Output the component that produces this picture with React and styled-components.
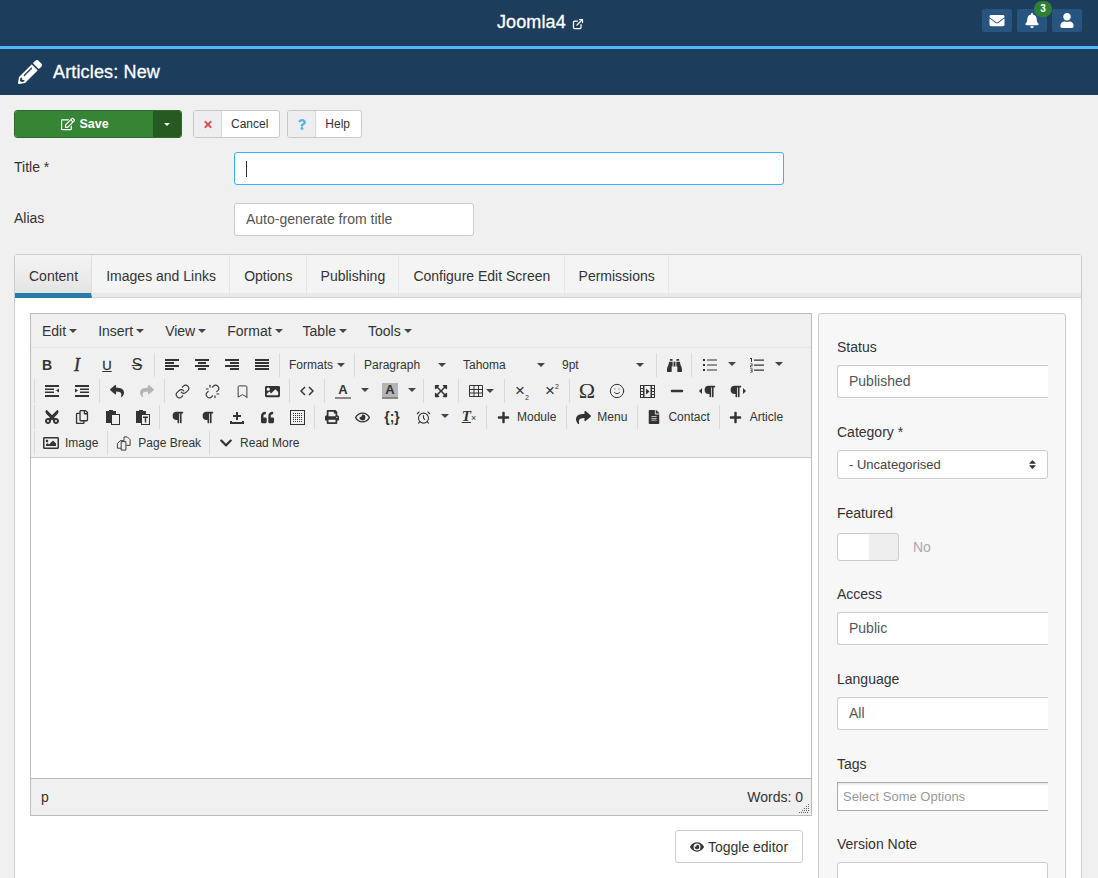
import React from "react";
import styled, { createGlobalStyle } from "styled-components";
import {
  FaReply, FaShare, FaImage, FaRegImage, FaExpandArrowsAlt, FaRegEye, FaEye, FaMinus, FaParagraph, FaCut, FaRegCopy,
  FaQuoteLeft, FaPrint, FaPlus, FaFileAlt, FaChevronDown, FaEnvelope, FaBell, FaUser, FaPencilAlt, FaRegEdit,
  FaTimes, FaQuestion, FaSort, FaBinoculars,
} from "react-icons/fa";
import { ExternalLink, Link, Unlink, Bookmark, AlarmClock, Smile } from "lucide-react";

const Global = createGlobalStyle`
  html, body { margin: 0; padding: 0; background: #f0f0f0; }
  body { font-family: "Liberation Sans", Arial, sans-serif; font-size: 14px; color: #333; }
  * { box-sizing: border-box; }
`;

const Page = styled.div`height: 878px; overflow: hidden; background: #f0f0f0;`;
const TopBar = styled.header`
  height: 49px; background: #1c3d5c; border-bottom: 3px solid #4fb8fb;
  display: flex; align-items: center; justify-content: flex-end; padding: 0 16px 3px 0; position: relative;
`;
const Brand = styled.div`
  position: absolute; left: 497px; top: 12px; color: #fff; font-size: 18px; line-height: 21px; letter-spacing: 0.1px;
  -webkit-text-stroke: 0.3px #fff; display: flex; align-items: center; gap: 6px;
  svg { margin-top: 2px; -webkit-text-stroke: 0; }
`;
const TopButtons = styled.div`display: flex; gap: 5px; margin-top: -3px;`;
const TopButton = styled.div`
  width: 30px; height: 23px; background: #285580; border-radius: 2px; color: #fff; position: relative;
  display: flex; align-items: center; justify-content: center;
  svg { width: 16px; height: 15px; }
`;
const Badge = styled.span`
  position: absolute; left: 17px; top: -8px; width: 18px; height: 16px; border-radius: 8px; background: #2f8033;
  color: #fff; font-size: 10px; font-weight: 700; line-height: 16px; text-align: center;
`;
const TitleBar = styled.div`
  height: 46px; background: #1c3d5c; color: #fff; display: flex; align-items: center; padding-left: 18px; gap: 11px;
  svg { width: 24px; height: 24px; }
`;
const PageTitle = styled.h1`margin: 0; font-size: 18px; font-weight: 400; letter-spacing: 0.15px; -webkit-text-stroke: 0.3px #fff;`;
const Actions = styled.div`display: flex; padding: 15px 14px 0; height: 43px;`;
const SaveGroup = styled.div`
  width: 168px; height: 28px; display: flex; border-radius: 3px; overflow: hidden; color: #fff; font-size: 12.500px;
  font-weight: 700; border: 1px solid #2a6b2a; margin-right: 11px;
`;
const SaveMain = styled.div`
  flex: 1; background: #358535; display: flex; align-items: center; justify-content: center; gap: 4px; padding-left: 2px;
  svg { width: 14px; height: 14px; }
`;
const SaveCaret = styled.div`width: 28px; background: #275a21; display: flex; align-items: center; justify-content: center;`;
const Btn = styled.div`
  height: 28px; display: flex; border: 1px solid #c8c8c8; border-radius: 3px; overflow: hidden; margin-right: 7px;
  background: #fff; font-size: 12px; color: #333;
`;
const BtnIcon = styled.span`
  width: 28px; background: #eeeef0; border-right: 1px solid #d8d8d8; display: flex; align-items: center; justify-content: center;
  color: ${(p) => p.$color};
  svg { width: 10px; height: 11px; }
`;
const BtnText = styled.span`padding: 0 11px 0 9px; line-height: 26px;`;
const FormRow = styled.div`display: flex; padding-left: 14px; margin-top: ${(p) => p.$top}px;`;
const RowLabel = styled.label`width: 220px; font-size: 14px; line-height: 16px; color: #333; padding-top: 7px;`;
const TextInput = styled.div`
  width: ${(p) => p.$w}px; height: 33px; background: #fff; border: 1px solid ${(p) => (p.$focus ? "#2fb5ff" : "#ccc")};
  border-radius: 3px; font-size: 14px; line-height: 31px; padding-left: 11px; color: #555;
`;
const TextCursor = styled.span`display: inline-block; width: 1px; height: 16px; background: #333; vertical-align: middle;`;

const TabPanel = styled.section`
  margin: 18px 16px 0 14px; background: #fff; border: 1px solid #ccc; border-radius: 3px 3px 0 0; height: 700px;
`;
const TabBar = styled.nav`display: flex; height: 43px; background: #f4f4f4; border-bottom: 1px solid #d4d4d4; box-shadow: inset 0 -4px 0 #e9e9e9;`;
const Tab = styled.div`
  padding: 0 13.200px 0 14px; font-size: 14px; line-height: 42px; color: #333; border-right: 1px solid #e6e6e6;
  ${(p) => p.$active && "background: linear-gradient(#f4f4f4, #e4e4e4); border-bottom: 5px solid #2a7ca6; height: 43px; border-right: 1px solid #ddd;"}
`;
const TabBody = styled.div`display: flex; gap: 6px; padding: 15px 15px 0;`;
const EditorCol = styled.div`width: 782px; flex: none;`;
const Editor = styled.div`border: 1px solid #bbb; background: #f0f0f0;`;
const MenuBar = styled.div`display: flex; height: 34px; align-items: center; padding-left: 11px; border-bottom: 1px solid #e4e4e4; color: #333;`;
const MenuItem = styled.span`
  font-size: 14px; margin-right: 21px; display: inline-flex; align-items: center; gap: 3px;
  &:nth-child(4) { margin-right: 20px; }
`;
const Caret = styled.i`
  display: inline-block; flex: none; width: 0; height: 0; border-left: 4px solid transparent; border-right: 4px solid transparent;
  border-top: 4px solid ${(p) => p.$color || "#444"};
`;
const SmallCaret = styled.i`
  display: block; width: 0; height: 0; border-left: 3px solid transparent; border-right: 3px solid transparent; border-top: 3px solid #fff;
`;
const Toolbars = styled.div`padding-top: 4px; border-bottom: 1px solid #c8c8c8; height: 110px;`;
const ToolRow = styled.div`display: flex; height: 26px; padding-left: 3px;`;
const Group = styled.div`
  display: flex; height: 24px; margin: 1px 2px 1px 0; padding-left: 2px;
  ${(p) => (p.$first ? "margin-left: -2px; padding-left: 0;" : "border-left: 1px solid #dadada;")}
`;
const ToolBtn = styled.div`
  width: ${(p) => p.$w || 30}px; height: 24px; display: flex; align-items: center; justify-content: center; flex: none;
  color: ${(p) => p.$color || "#333"}; font-size: 12px; position: relative; gap: 3px;
  svg { display: block; }
`;
const SplitCaret = styled.span`position: absolute; left: 34px; top: 9px; display: flex;`;
const SplitIcon = styled.span`position: absolute; left: 8px; top: 4px; display: flex; align-items: center; justify-content: center; width: 16px; height: 16px;`;
const TextBtn = styled.div`
  display: flex; align-items: center; height: 24px; padding: 0 ${(p) => p.$pr ?? 8}px 0 6px; font-size: 12px; color: #333; gap: 6px;
  svg { display: block; }
`;
const Dropdown = styled.div`display: flex; align-items: center; height: 24px; padding: 0 7px; font-size: 12px; color: #333; gap: 4px;`;
const IconBox = styled.span`width: 16px; height: 16px; display: flex; align-items: center; justify-content: center; flex: none;`;
const SelectBtn = styled.div`
  width: 99px; height: 24px; padding-left: 7px; display: flex; align-items: center; font-size: 12px; color: #333; position: relative;
`;
const SelectCaret = styled.span`position: absolute; left: 81px; top: 10px; display: flex;`;
const ColorGlyph = styled.span`
  display: block; width: 16px; height: 16px; font-size: 13px; font-weight: 700; line-height: 14px; text-align: center; color: #333;
  background: ${(p) => (p.$bg ? "#b5b5b5" : "transparent")}; border-bottom: 2px solid #888;
`;
const Omega = styled.span`font-family: "Liberation Serif", serif; font-size: 22px; line-height: 16px; color: #333;`;
const CodeGlyph = styled.span`font-size: 14px; font-weight: 700; color: #333;`;
const ScriptGlyph = styled.span`
  font-size: 17px; color: #333; line-height: 16px;
  sub, sup { font-size: 7px; line-height: 0; }
`;
const ClearGlyph = styled.span`
  font-family: "Liberation Serif", serif; font-style: italic; font-weight: 700; font-size: 15px; line-height: 14px;
  color: #333; text-decoration: underline;
  small { font-size: 9px; font-style: normal; font-family: "Liberation Sans", sans-serif; font-weight: 400; display: inline-block; text-decoration: none; }
`;
const BoldGlyph = styled.span`font-size: 14px; font-weight: 700; color: #333;`;
const ItalicGlyph = styled.span`font-family: "Liberation Serif", serif; font-style: italic; font-size: 18px; -webkit-text-stroke: 0.4px #333; color: #333;`;
const UnderGlyph = styled.span`font-size: 13px; text-decoration: underline; -webkit-text-stroke: 0.3px #333; color: #333;`;
const StrikeGlyph = styled.span`font-size: 16px; text-decoration: line-through; color: #333;`;
const ParaRow = styled.span`display: flex; align-items: center; gap: 1px;`;
const FlipCut = styled.span`display: flex; transform: rotate(-90deg);`;
const Canvas = styled.div`height: 321px; background: #fff; border-bottom: 1px solid #bbb;`;
const StatusBar = styled.div`
  height: 36px; display: flex; justify-content: space-between; align-items: center; padding: 0 8px 0 10px; position: relative; font-size: 14px; color: #333;
`;
const Resize = styled.svg`position: absolute; right: 2px; bottom: 2px;`;
const ToggleRow = styled.div`display: flex; justify-content: flex-end; margin-top: 14px; padding-right: 9px;`;
const ToggleEditor = styled.div`
  width: 128px; height: 33px; background: #fff; border: 1px solid #ccc; border-radius: 3px; display: flex; align-items: center;
  justify-content: center; gap: 4px; font-size: 14px; color: #333;
`;
const Side = styled.aside`
  width: 248px; height: 660px; background: #f7f7f7; border: 1px solid #ccc; border-radius: 3px 3px 0 0; padding: 23px 17px 0 18px;
`;
const Field = styled.div`margin-bottom: ${(p) => p.$mb ?? 24}px;`;
const FieldLabel = styled.label`display: block; font-size: 14px; line-height: 20px; margin-bottom: 8px; color: #333;`;
const SideInput = styled.div`
  width: 211px; height: 33px; background: #fff; border: 1px solid #ccc; border-right: ${(p) => (p.$closed ? "1px solid #ccc" : "none")};
  border-radius: ${(p) => (p.$closed ? "3px" : "3px 0 0 3px")}; font-size: 14px; line-height: 31px; padding-left: 11px; color: #555;
`;
const SideSelect = styled.div`
  width: 211px; height: 29px; background: #fff; border: 1px solid #ccc; border-radius: 3px; font-size: 13px; padding: 0 9px 0 11px;
  display: flex; align-items: center; justify-content: space-between; color: #444;
`;
const TagInput = styled.div`
  width: 211px; height: 29px; background: #fff; border: 1px solid #aaa; border-right: none; font-size: 13px; line-height: 27px;
  padding-left: 5px; color: #999; box-shadow: inset 0 3px 3px -2px #ddd;
`;
const SwitchRow = styled.div`display: flex; align-items: center; gap: 14px; margin-top: 10px;`;
const Switch = styled.div`width: 62px; height: 28px; background: #eee; border: 1px solid #ccc; border-radius: 3px; overflow: hidden;`;
const Knob = styled.div`width: 31px; height: 100%; background: #fff; border-radius: 2px;`;
const NoText = styled.span`font-size: 14px; color: #aaa;`;

const Lines = ({ rows }) => (
  <svg width="16" height="14" viewBox="0 0 16 14">
    {rows.map(([x, y, w, h = 2], i) => <rect key={i} x={x} y={y} width={w} height={h} fill="#333" />)}
  </svg>
);
const alignL = [[1, 1, 14], [1, 4, 9], [1, 7, 14], [1, 10, 9]];
const alignC = [[1, 1, 14], [4, 4, 8], [1, 7, 14], [4, 10, 8]];
const alignR = [[1, 1, 14], [6, 4, 9], [1, 7, 14], [6, 10, 9]];
const alignJ = [[1, 1, 14], [1, 4, 14], [1, 7, 14], [1, 10, 14]];
const Outdent = () => (
  <svg width="16" height="14" viewBox="0 0 16 14"><path fill="#333" d="M1 1h14v2H1zM1 4.500h9v1.500H1zM1 7.500h9V9H1zM1 11h14v2H1zM15 4.500v4l-3-2z" /></svg>
);
const Indent = () => (
  <svg width="16" height="14" viewBox="0 0 16 14"><path fill="#333" d="M1 1h14v2H1zM6 4.500h9v1.500H6zM6 7.500h9V9H6zM1 11h14v2H1zM1 4.500v4l3-2z" /></svg>
);
const ListBullet = () => (
  <svg width="16" height="14" viewBox="0 0 16 14"><path fill="#333" d="M1 1h2v2H1zM1 6h2v2H1zM1 11h2v2H1zM5 1.500h10v1H5zM5 6.500h10v1H5zM5 11.500h10v1H5z" /></svg>
);
const ListNum = () => (
  <svg width="16" height="16" viewBox="0 0 16 16">
    <path fill="#333" d="M5 2.500h10v1.200H5zM5 7.500h10v1.200H5zM5 12.500h10v1.200H5zM1 1h2v4H2V2H1zM1 6.500h2.500v2.500H2v.7h1.500v.6H1V8.400h1.500v-1.300H1zM1 11.500h2.500v4H1V15h1.500v-1H1.300v-.6H2.500v-1.300H1z" />
  </svg>
);
const Table = () => (
  <svg width="14" height="12" viewBox="0 0 14 12" fill="none" stroke="#333">
    <path d="M.5.500h13v11H.5zM.5 4.500h13M.5 8h13M5 .500v11M9.500.500v11" />
  </svg>
);
const Film = () => (
  <svg width="15" height="13" viewBox="0 0 15 13">
    <path fill="#333" fillRule="evenodd" d="M0 0h15v13H0zM1 1v2h2V1zM1 4v2h2V4zM1 7v2h2V7zM1 10v2h2v-2zM12 1v2h2V1zM12 4v2h2V4zM12 7v2h2V7zM12 10v2h2v-2zM4.500 1v11h6V1z" />
    <path fill="#333" d="M6 3.500l3.500 3-3.500 3z" />
  </svg>
);
const Upload = () => (
  <svg width="16" height="16" viewBox="0 0 16 16"><path fill="#333" d="M7 3h2v3h3v2H9v3H7V8H4V6h3zM1 12h2v1h10v-1h2v3H1z" /></svg>
);
const Template = () => (
  <svg width="15" height="15" viewBox="0 0 15 15">
    <rect x=".5" y=".5" width="14" height="14" fill="none" stroke="#333" />
    <path stroke="#333" strokeDasharray="1 1" d="M3 3.500h9M3 5.500h9M3 7.500h9M3 9.500h9M3 11.500h9" />
  </svg>
);
const PageBreak = () => (
  <svg width="17" height="17" viewBox="0 0 17 17" fill="none" stroke="#333">
    <path d="M1.500 8.500l3-3h4v-4h3.500l3 3v6h-4" /><path d="M5.500 6.500h5v9h-5z" /><path d="M1.500 8.500v5h4" />
  </svg>
);
const Code = () => (
  <svg width="14" height="10" viewBox="0 0 14 10" fill="none" stroke="#333" strokeWidth="1.500"><path d="M5 1L1 5l4 4M9 1l4 4-4 4" /></svg>
);
const Paste = ({ t }) => (
  <svg width="15" height="16" viewBox="0 0 15 16">
    <path fill="#333" d="M1 2h3V1h4v1h3v3H7v9H1z" />
    <path fill="#333" fillRule="evenodd" d="M6 5h9v11H6zM7 6v9h7V6z" />
    {t && <path fill="#333" d="M8 7.500h5v1.500h-1.800v4.500H9.800V9H8z" />}
  </svg>
);
const Para = ({ dir }) => (
  <ParaRow>
    {dir === "l" && <svg width="3" height="6" viewBox="0 0 3 6"><path d="M3 0v6L0 3z" fill="#333" /></svg>}
    <FaParagraph size={13} />
    {dir === "r" && <svg width="3" height="6" viewBox="0 0 3 6"><path d="M0 0v6l3-3z" fill="#333" /></svg>}
  </ParaRow>
);

const Split = ({ children }) => (
  <ToolBtn $w={47}>
    <SplitIcon>{children}</SplitIcon>
    <SplitCaret><Caret /></SplitCaret>
  </ToolBtn>
);
const I = ({ children, color }) => <ToolBtn $color={color}>{children}</ToolBtn>;
const T = ({ icon, children, pr }) => <TextBtn $pr={pr}><IconBox>{icon}</IconBox>{children}</TextBtn>;
const Sel = ({ children }) => <SelectBtn>{children}<SelectCaret><Caret /></SelectCaret></SelectBtn>;

export default function App() {
  return (
    <Page>
      <Global />
      <TopBar>
        <Brand>Joomla4 <ExternalLink size={12} strokeWidth={2.5} /></Brand>
        <TopButtons>
          <TopButton><FaEnvelope /></TopButton>
          <TopButton><FaBell /><Badge>3</Badge></TopButton>
          <TopButton><FaUser /></TopButton>
        </TopButtons>
      </TopBar>
      <TitleBar><FaPencilAlt /><PageTitle>Articles: New</PageTitle></TitleBar>
      <Actions>
        <SaveGroup>
          <SaveMain><FaRegEdit /> Save</SaveMain>
          <SaveCaret><SmallCaret /></SaveCaret>
        </SaveGroup>
        <Btn><BtnIcon $color="#d9534f"><FaTimes /></BtnIcon><BtnText>Cancel</BtnText></Btn>
        <Btn><BtnIcon $color="#4db6e6"><FaQuestion /></BtnIcon><BtnText>Help</BtnText></Btn>
      </Actions>
      <FormRow $top={14}>
        <RowLabel>Title *</RowLabel>
        <TextInput $w={550} $focus><TextCursor /></TextInput>
      </FormRow>
      <FormRow $top={18}>
        <RowLabel>Alias</RowLabel>
        <TextInput $w={240}>Auto-generate from title</TextInput>
      </FormRow>
      <TabPanel>
        <TabBar>
          <Tab $active>Content</Tab>
          <Tab>Images and Links</Tab>
          <Tab>Options</Tab>
          <Tab>Publishing</Tab>
          <Tab>Configure Edit Screen</Tab>
          <Tab>Permissions</Tab>
        </TabBar>
        <TabBody>
          <EditorCol>
            <Editor>
              <MenuBar>
                <MenuItem>Edit <Caret /></MenuItem>
                <MenuItem>Insert <Caret /></MenuItem>
                <MenuItem>View <Caret /></MenuItem>
                <MenuItem>Format <Caret /></MenuItem>
                <MenuItem>Table <Caret /></MenuItem>
                <MenuItem>Tools <Caret /></MenuItem>
              </MenuBar>
              <Toolbars>
                <ToolRow>
                  <Group $first>
                    <I><BoldGlyph>B</BoldGlyph></I><I><ItalicGlyph>I</ItalicGlyph></I><I><UnderGlyph>U</UnderGlyph></I><I><StrikeGlyph>S</StrikeGlyph></I>
                  </Group>
                  <Group>
                    <I><Lines rows={alignL} /></I><I><Lines rows={alignC} /></I><I><Lines rows={alignR} /></I><I><Lines rows={alignJ} /></I>
                  </Group>
                  <Group><Dropdown>Formats <Caret /></Dropdown></Group>
                  <Group>
                    <Sel>Paragraph</Sel><Sel>Tahoma</Sel><Sel>9pt</Sel>
                  </Group>
                  <Group><I><FaBinoculars size={15} /></I></Group>
                  <Group>
                    <Split><ListBullet /></Split><Split><ListNum /></Split>
                  </Group>
                </ToolRow>
                <ToolRow>
                  <Group><I><Outdent /></I><I><Indent /></I></Group>
                  <Group><I><FaReply size={14} /></I><I color="#b5b5b5"><FaShare size={14} /></I></Group>
                  <Group>
                    <I><Link size={15} strokeWidth={1.8} /></I><I><Unlink size={15} strokeWidth={1.8} /></I>
                    <I><Bookmark size={15} strokeWidth={1.5} /></I><I><FaImage size={15} /></I>
                  </Group>
                  <Group><I><Code /></I></Group>
                  <Group>
                    <Split><ColorGlyph>A</ColorGlyph></Split><Split><ColorGlyph $bg>A</ColorGlyph></Split>
                  </Group>
                  <Group><I><FaExpandArrowsAlt size={14} /></I></Group>
                  <Group>
                    <ToolBtn $w={41}><Table /><Caret /></ToolBtn>
                  </Group>
                  <Group>
                    <I><ScriptGlyph>×<sub>2</sub></ScriptGlyph></I><I><ScriptGlyph>×<sup>2</sup></ScriptGlyph></I>
                  </Group>
                  <Group>
                    <I><Omega>Ω</Omega></I><I><Smile size={16} strokeWidth={1.5} /></I><I><Film /></I><I><FaMinus size={14} /></I><I><Para dir="l" /></I><I><Para dir="r" /></I>
                  </Group>
                </ToolRow>
                <ToolRow>
                  <Group>
                    <I><FlipCut><FaCut size={16} /></FlipCut></I><I><FaRegCopy size={14} /></I><I><Paste /></I><I><Paste t /></I>
                  </Group>
                  <Group>
                    <I><FaParagraph size={13} /></I><I><FaParagraph size={13} /></I><I><Upload /></I><I><FaQuoteLeft size={13} /></I><I><Template /></I>
                  </Group>
                  <Group>
                    <I><FaPrint size={14} /></I><I><FaRegEye size={15} /></I><I><CodeGlyph>{"{;}"}</CodeGlyph></I>
                    <Split><AlarmClock size={15} strokeWidth={1.7} /></Split>
                    <I><ClearGlyph>T<small>×</small></ClearGlyph></I>
                  </Group>
                  <Group><T icon={<FaPlus size={13} />}>Module</T></Group>
                  <Group><T icon={<FaShare size={15} />}>Menu</T></Group>
                  <Group><T icon={<FaFileAlt size={14} />} pr={7}>Contact</T></Group>
                  <Group><T icon={<FaPlus size={13} />}>Article</T></Group>
                </ToolRow>
                <ToolRow>
                  <Group><T icon={<FaRegImage size={16} />} pr={7}>Image</T></Group>
                  <Group><T icon={<PageBreak />} pr={6}>Page Break</T></Group>
                  <Group><T icon={<FaChevronDown size={14} />}>Read More</T></Group>
                </ToolRow>
              </Toolbars>
              <Canvas />
              <StatusBar>
                <span>p</span>
                <span>Words: 0</span>
                <Resize width="10" height="10" viewBox="0 0 10 10">
                  <path stroke="#666" strokeDasharray="1 1" d="M0 9.500h10M3 7.500h7M5 5.500h5M7 3.500h3M9 1.500h1" />
                </Resize>
              </StatusBar>
            </Editor>
            <ToggleRow>
              <ToggleEditor><FaEye size={14} /> Toggle editor</ToggleEditor>
            </ToggleRow>
          </EditorCol>
          <Side>
            <Field><FieldLabel>Status</FieldLabel><SideInput>Published</SideInput></Field>
            <Field><FieldLabel>Category *</FieldLabel>
              <SideSelect>- Uncategorised <FaSort size={11} color="#333" /></SideSelect></Field>
            <Field $mb={23}><FieldLabel>Featured</FieldLabel>
              <SwitchRow><Switch><Knob /></Switch><NoText>No</NoText></SwitchRow></Field>
            <Field><FieldLabel>Access</FieldLabel><SideInput>Public</SideInput></Field>
            <Field><FieldLabel>Language</FieldLabel><SideInput>All</SideInput></Field>
            <Field $mb={23}><FieldLabel>Tags</FieldLabel><TagInput>Select Some Options</TagInput></Field>
            <Field><FieldLabel>Version Note</FieldLabel><SideInput $closed /></Field>
          </Side>
        </TabBody>
      </TabPanel>
    </Page>
  );
}
